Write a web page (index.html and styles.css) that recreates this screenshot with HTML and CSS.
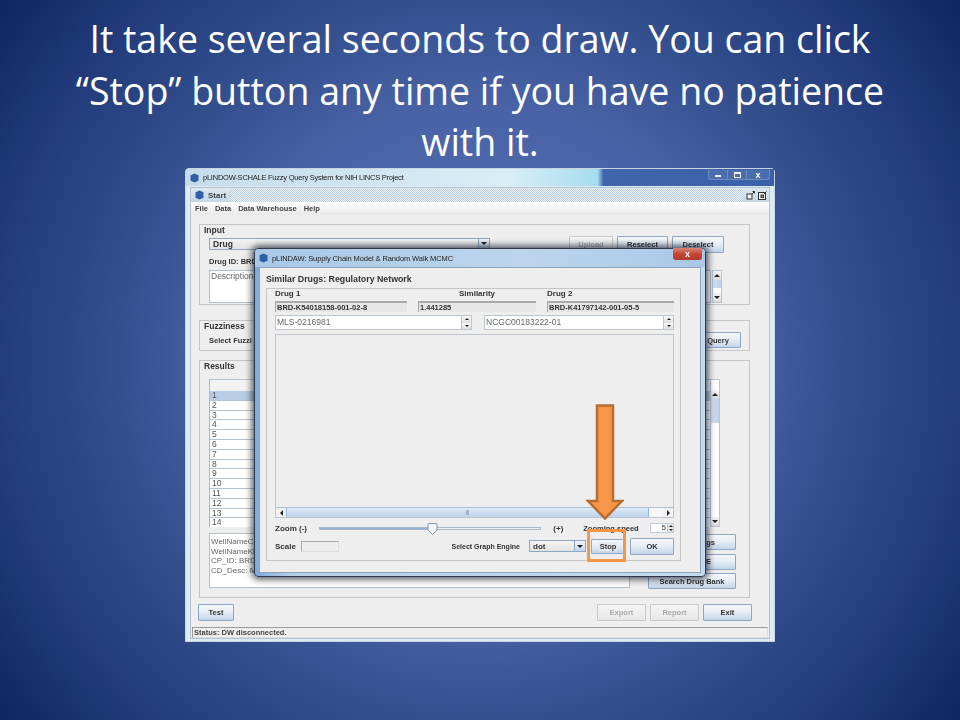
FILE: index.html
```html
<!DOCTYPE html>
<html>
  <head>
    <meta charset="UTF-8" />
    <title>Stop button slide</title>
    <link rel="stylesheet" href="styles.css">
  </head>
  <body>
    <div class="slide">
      <h1 class="slide-title">It take several seconds to draw. You can click<br>“Stop” button any time if you have no patience<br>with it.</h1>

      <!-- main application window -->
      <div class="window app-window">
        <div class="titlebar">
          <svg class="logo" viewBox="0 0 10 10"><polygon points="5,0 9.4,2 9.4,8 5,10 0.6,8 0.6,2" /></svg>
          <span class="titlebar-text app-title">pLINDOW-SCHALE Fuzzy Query System for NIH LINCS Project</span>
          <div class="win-controls">
            <span class="win-btn"><i class="min-glyph"></i></span>
            <span class="win-btn"><i class="max-glyph"></i></span>
            <span class="win-btn win-close">x</span>
          </div>
        </div>
        <div class="frame">
          <div class="frame-head">
            <div class="frame-name">
              <svg class="logo" viewBox="0 0 10 10"><polygon points="5,0 9.4,2 9.4,8 5,10 0.6,8 0.6,2" /></svg>
              <span>Start</span>
            </div>
            <div class="frame-dots"></div>
            <div class="frame-icons">
              <svg class="frame-icon" viewBox="0 0 9 9"><rect x="1" y="3" width="5" height="5" /><path d="M6 3 L8.5 .5 M6.5 .5 H8.5 V2.5" /></svg>
              <svg class="frame-icon" viewBox="0 0 9 9"><rect x=".5" y="1.5" width="7" height="7" /><rect class="inner" x="3" y="4" width="2.5" height="2.5" /><path d="M6 3 L8.5 .5" /></svg>
            </div>
          </div>
          <div class="menubar">
            <span>File</span><span>Data</span><span>Data Warehouse</span><span>Help</span>
          </div>
          <div class="frame-body">
            <div class="group group-input">
              <div class="group-name">Input</div>
              <div class="input-row">
                <div class="combo input-combo"><span>Drug</span><b class="combo-arrow"><i class="tri-down"></i></b></div>
                <div class="btn-row">
                  <button class="btn btn-off upload">Upload</button>
                  <button class="btn reselect">Reselect</button>
                  <button class="btn deselect">Deselect</button>
                </div>
              </div>
              <div class="drug-id">Drug ID: BRD</div>
              <div class="desc-row">
                <div class="textbox desc-box">Description:</div>
                <div class="vscroll desc-scroll">
                  <b class="vs-btn"><i class="tri-up"></i></b>
                  <b class="vs-thumb"></b>
                  <b class="vs-space"></b>
                  <b class="vs-btn"><i class="tri-down"></i></b>
                </div>
              </div>
            </div>

            <div class="group group-fuzzy">
              <div class="group-name">Fuzziness</div>
              <div class="fuzzy-row">
                <span class="bold">Select Fuzzi</span>
                <button class="btn query">Query</button>
              </div>
            </div>

            <div class="group group-results">
              <div class="group-name">Results</div>
              <div class="table-wrap">
                <div class="table">
                  <div class="table-head"></div>
                  <div class="tr tr-on">1</div>
                  <div class="tr">2</div>
                  <div class="tr">3</div>
                  <div class="tr">4</div>
                  <div class="tr">5</div>
                  <div class="tr">6</div>
                  <div class="tr">7</div>
                  <div class="tr">8</div>
                  <div class="tr">9</div>
                  <div class="tr">10</div>
                  <div class="tr">11</div>
                  <div class="tr">12</div>
                  <div class="tr">13</div>
                  <div class="tr">14</div>
                </div>
                <div class="vscroll table-scroll">
                  <b class="vs-btn"><i class="tri-up"></i></b>
                  <b class="vs-thumb table-thumb"></b>
                  <b class="vs-space"></b>
                  <b class="vs-btn"><i class="tri-down"></i></b>
                </div>
              </div>
              <div class="results-bottom">
                <div class="textbox detail-box">
                  WellNameCF<br>WellNameKD<br>CP_ID: BRD-<br>CD_Desc: M
                </div>
                <div class="side-btns">
                  <button class="btn clip-btn">ngs</button>
                  <button class="btn clip-btn clip-fe">FE</button>
                  <button class="btn">Search Drug Bank</button>
                </div>
              </div>
            </div>

            <div class="footer">
              <button class="btn test">Test</button>
              <div class="footer-right">
                <button class="btn btn-off foot-btn">Export</button>
                <button class="btn btn-off foot-btn">Report</button>
                <button class="btn foot-btn">Exit</button>
              </div>
            </div>
          </div>
          <div class="statusbar">Status: DW disconnected.</div>
        </div>
      </div>

      <!-- dialog on top -->
      <div class="window dialog">
        <div class="titlebar dialog-bar">
          <svg class="logo" viewBox="0 0 10 10"><polygon points="5,0 9.4,2 9.4,8 5,10 0.6,8 0.6,2" /></svg>
          <span class="titlebar-text dialog-title">pLINDAW: Supply Chain Model &amp; Random Walk MCMC</span>
          <span class="dialog-close">x</span>
        </div>
        <div class="dialog-body">
          <div class="dialog-heading">Similar Drugs: Regulatory Network</div>
          <div class="dialog-group">
            <div class="drug-grid">
              <span>Drug 1</span>
              <span class="similarity">Similarity</span>
              <span>Drug 2</span>
              <div class="readonly">BRD-K54018158-001-02-8</div>
              <div class="readonly">1.441285</div>
              <div class="readonly">BRD-K41797142-001-05-5</div>
            </div>
            <div class="spin-row">
              <div class="spin-field spin-left">
                <div class="spin-text">MLS-0216981</div>
                <div class="spin-btns"><b><i class="tri-up"></i></b><b><i class="tri-down"></i></b></div>
              </div>
              <div class="spin-field spin-right">
                <div class="spin-text">NCGC00183222-01</div>
                <div class="spin-btns"><b><i class="tri-up"></i></b><b><i class="tri-down"></i></b></div>
              </div>
            </div>
            <div class="canvas">
              <div class="canvas-space"></div>
              <div class="hscroll">
                <b class="hs-btn"><i class="tri-left"></i></b>
                <b class="hs-thumb"><i class="hs-grip"></i></b>
                <b class="hs-space"></b>
                <b class="hs-btn"><i class="tri-right"></i></b>
              </div>
            </div>
            <div class="zoom-row">
              <span class="zoom-minus">Zoom (-)</span>
              <div class="slider">
                <div class="slider-fill"></div>
                <svg class="slider-thumb" viewBox="0 0 11 12"><path d="M1 1.5 Q1 .5 2 .5 H9 Q10 .5 10 1.5 V7 L5.5 11.5 L1 7 Z" /></svg>
              </div>
              <span class="zoom-plus">(+)</span>
              <span class="zoom-speed">Zooming speed</span>
              <div class="mini-spin">
                <span>5</span>
                <div class="spin-btns"><b><i class="tri-up"></i></b><b><i class="tri-down"></i></b></div>
              </div>
            </div>
            <div class="scale-row">
              <span>Scale</span>
              <div class="scale-box"></div>
              <span class="engine-label">Select Graph Engine</span>
              <div class="combo engine-combo"><span>dot</span><b class="combo-arrow"><i class="tri-down"></i></b></div>
              <button class="btn stop"><span>Stop</span></button>
              <button class="btn ok">OK</button>
            </div>
          </div>
        </div>
      </div>

      <!-- slide annotations -->
      <svg class="arrow" viewBox="0 0 38 116">
        <path d="M11 1.5 H27 V97 H36 L19 114.5 L2 97 H11 Z" />
      </svg>
      <div class="highlight"></div>
    </div>
  </body>
</html>
```

FILE: styles.css
```css
* {
  box-sizing: border-box;
}
body {
  margin: 0;
  font-family: "Liberation Sans", Arial, sans-serif;
}
button {
  font-family: inherit;
  padding: 0;
}
i, b {
  display: block;
}

.slide {
  position: relative;
  width: 960px;
  height: 720px;
  overflow: hidden;
  background: radial-gradient(circle 600px at 480px 360px, #5070b4 0%, #4a63a6 42%, #34508f 60%, #243c7b 80%, #0e2763 100%);
}
.slide-title {
  margin: 0;
  padding-top: 13px;
  text-align: center;
  color: #fff;
  font-family: "Open Sans", sans-serif;
  font-size: 37.5px;
  font-weight: 400;
  line-height: 51.5px;
}

/* windows */
.window {
  position: absolute;
  filter: blur(0.35px);
  color: #333;
  font-size: 8.5px;
}
.app-window {
  left: 185px;
  top: 168px;
  width: 590px;
  height: 474px;
  padding: 0 4px 4px;
  background: #dcecf4;
  border-radius: 4px 4px 0 0;
  border: 1px solid #c8d4e0;
}
.titlebar {
  display: flex;
  align-items: center;
  height: 17px;
  margin: 0 -4px;
  padding: 0 4px;
  background: linear-gradient(90deg, #c6dcec 0, #d9edf7 55%, #a6dcef 70%, #3f65ab 71%, #3a60a8 100%);
}
.logo {
  width: 9px;
  height: 10px;
  margin-right: 4px;
  flex: none;
  fill: #2f5fa6;
}
.titlebar-text {
  font-family: "Liberation Sans", sans-serif;
  font-size: 7.5px;
  color: #222;
  white-space: nowrap;
}
.app-title {
  letter-spacing: -.24px;
}
.dialog-title {
  letter-spacing: -.1px;
}
.win-controls {
  display: flex;
  margin-left: auto;
  margin-top: -5px;
  height: 10px;
  border: 1px solid #6d8bbd;
  border-top: 0;
  border-radius: 0 0 3px 3px;
}
.win-btn {
  display: flex;
  align-items: center;
  justify-content: center;
  width: 19px;
  border-right: 1px solid #6d8bbd;
  color: #fff;
  font-size: 9px;
  font-weight: bold;
  background: rgba(255,255,255,.08);
}
.win-close {
  width: 22px;
  border-right: 0;
}
.min-glyph {
  width: 6px;
  height: 2px;
  margin-top: 3px;
  background: #eee;
}
.max-glyph {
  width: 7px;
  height: 6px;
  border: 1px solid #eee;
  border-top-width: 2px;
}

.frame {
  height: 452px;
  margin-top: 1px;
  background: #eee;
  border: 1px solid #b5c2cf;
  display: flex;
  flex-direction: column;
}
.frame-head {
  display: flex;
  align-items: center;
  height: 15px;
  background: linear-gradient(#dde8f2, #c4d6e6);
}
.frame-name {
  display: flex;
  align-items: center;
  padding: 0 4px 0 4px;
  font-weight: bold;
  font-size: 8px;
  color: #444;
}
.frame-dots {
  flex: 1;
  height: 13px;
  background: repeating-conic-gradient(#b9cde0 0 25%, #eef3f8 0 50%) 0 0/2px 2px;
}
.frame-icons {
  display: flex;
  gap: 3px;
  padding: 0 2px 0 3px;
}
.frame-icon {
  width: 9px;
  height: 9px;
  fill: #f4f4f4;
  stroke: #333;
  stroke-width: 1;
}
.frame-icon .inner {
  fill: #8fa6c0;
  stroke: #333;
}
.menubar {
  display: flex;
  gap: 7px;
  align-items: center;
  height: 13px;
  padding-left: 4px;
  font-weight: bold;
  font-size: 7.5px;
  color: #444;
  background: linear-gradient(#fff, #e8e8e8);
}
.frame-body {
  flex: 1;
  padding: 9px 17px 0 7px;
}

.group {
  position: relative;
  margin: 0 2px 0 1px;
  border: 1px solid #c6c6c6;
  padding-left: 9px;
}
.group-name {
  height: 11px;
  margin-left: -5px;
  font-weight: bold;
  font-size: 8.5px;
  line-height: 10px;
  color: #333;
}
.group-input {
  height: 81px;
  margin-bottom: 15px;
}
.group-fuzzy {
  height: 31px;
  margin-bottom: 9px;
}
.group-results {
  height: 238px;
  margin-bottom: 6px;
}
.group-results .group-name {
  height: 13px;
}
.bold {
  font-weight: bold;
}

.btn {
  height: 17px;
  font-size: 7.5px;
  font-weight: bold;
  color: #333;
  border: 1px solid #8ea7c6;
  border-radius: 1px;
  background: linear-gradient(#f5f8fb, #e6edf5 45%, #c4d5e8);
}
.btn-off {
  color: #aaa;
  border-color: #c9c9c9;
  background: linear-gradient(#f4f4f4, #e8e8e8);
}

.combo {
  display: flex;
  align-items: center;
  padding-left: 3px;
  border: 1px solid #8ea7c6;
  background: linear-gradient(#f4f4f4, #e3e3e3);
  color: #333;
}
.combo-arrow {
  display: flex;
  align-items: center;
  justify-content: center;
  width: 11px;
  height: 100%;
  margin-left: auto;
  border-left: 1px solid #8ea7c6;
  background: linear-gradient(#f3f6fa, #c4d5e8);
}
.tri-down, .tri-up, .tri-left, .tri-right {
  width: 0;
  height: 0;
  border-style: solid;
  border-color: transparent;
}
.tri-down {
  border-width: 3px 3px 0;
  border-top-color: #222;
}
.tri-up {
  border-width: 0 3px 3px;
  border-bottom-color: #222;
}
.tri-left {
  border-width: 3px 3px 3px 0;
  border-right-color: #222;
}
.tri-right {
  border-width: 3px 0 3px 3px;
  border-left-color: #222;
}

.input-row {
  display: flex;
  align-items: center;
  height: 17px;
  padding-right: 25px;
}
.input-combo {
  width: 281px;
  height: 12px;
  margin-top: -2px;
  font-weight: bold;
}
.btn-row {
  display: flex;
  gap: 4px;
  margin-left: auto;
}
.upload { width: 44px; }
.reselect { width: 51px; }
.deselect { width: 52px; }
.drug-id {
  height: 16px;
  padding-top: 4px;
  font-weight: bold;
  font-size: 7.5px;
}
.desc-row {
  display: flex;
  gap: 1px;
  margin-top: 1px;
  height: 33px;
  padding-right: 27px;
}
.textbox {
  flex: 1;
  padding: 1px 1px;
  border: 1px solid #b4c0cc;
  background: #fff;
  color: #666;
  font-size: 8.5px;
  line-height: 9.7px;
}
.vscroll {
  display: flex;
  flex-direction: column;
  width: 10px;
  border: 1px solid #b4c6da;
  background: #fff;
}
.vs-btn {
  display: flex;
  align-items: center;
  justify-content: center;
  height: 9px;
  background: linear-gradient(#f6f6f6, #dcdcdc);
}
.vs-thumb {
  height: 8px;
  background: linear-gradient(90deg, #d5e3f2, #bcd0e6);
}
.vs-space {
  flex: 1;
}

.fuzzy-row {
  display: flex;
  align-items: flex-start;
  padding-right: 8px;
}
.query {
  width: 46px;
  height: 16px;
  margin-left: auto;
}
.fuzzy-row .bold {
  font-size: 7.5px;
  padding-top: 4px;
}

.table-wrap {
  display: flex;
  height: 148px;
  margin-top: 5px;
  padding-right: 29px;
}
.table {
  flex: 1;
  overflow: hidden;
  border-left: 1px solid #a9b6c6;
}
.table-head {
  height: 12px;
  border-top: 1px solid #b7c3d0;
  background: #f2f2f2;
}
.tr {
  height: 9.8px;
  padding-left: 2px;
  background: #fff;
  border-bottom: 1px solid #b8c3d2;
  font-size: 8.5px;
  line-height: 9px;
  color: #555;
}
.tr-on {
  background: #b7cde4;
}
.table-scroll {
  width: 10px;
  padding-top: 10px;
}
.table-thumb {
  height: 24px;
}

.results-bottom {
  display: flex;
  align-items: flex-start;
  margin-top: 6px;
  padding-right: 13px;
}
.detail-box {
  flex: none;
  width: 421px;
  height: 55px;
  padding: 3px 1px;
  font-size: 8px;
}
.side-btns {
  display: flex;
  flex-direction: column;
  gap: 3.5px;
  width: 88px;
  margin-top: 1px;
  margin-left: auto;
}
.side-btns .btn {
  height: 16px;
}
.clip-btn {
  padding-right: 20px;
  text-align: right;
}
.clip-fe {
  padding-right: 24px;
}

.footer {
  display: flex;
  justify-content: space-between;
}
.test {
  width: 36px;
}
.footer-right {
  display: flex;
  gap: 4px;
}
.foot-btn {
  width: 49px;
}
.statusbar {
  height: 11px;
  margin: 6px 1px 0;
  padding-left: 1px;
  border: 1px solid #9a9a9a;
  border-right-color: #ddd;
  border-bottom-color: #ddd;
  font-weight: bold;
  font-size: 7.5px;
  line-height: 9px;
  color: #444;
}

/* dialog */
.dialog {
  left: 254px;
  top: 248px;
  width: 452px;
  height: 329px;
  padding: 0 4px 4px;
  background: linear-gradient(90deg, #7fa9d9, #b5cfe8 8%, #c4daee);
  border: 1px solid #2e3a4c;
  border-radius: 4px;
  box-shadow: 0 0 7px 2px rgba(10,15,30,.75);
}
.dialog-bar {
  position: relative;
  height: 18px;
  background: linear-gradient(90deg, #a8c8e6, #bcd5ec 60%, #a9c8e6);
  border-radius: 4px 4px 0 0;
}
.dialog-close {
  position: absolute;
  right: 3px;
  top: -1px;
  display: flex;
  align-items: center;
  justify-content: center;
  width: 29px;
  height: 12px;
  color: #fff;
  font-size: 9px;
  font-weight: bold;
  border-radius: 0 0 3px 3px;
  background: linear-gradient(#d98677, #c6402f 55%, #b03d30);
}
.dialog-body {
  height: 306px;
  padding-left: 6px;
  padding-right: 19px;
  background: #eee;
  border: 1px solid #8fa4ba;
}
.dialog-heading {
  height: 20px;
  padding-top: 6px;
  font-size: 8.8px;
  font-weight: bold;
  color: #333;
}
.dialog-group {
  height: 273px;
  padding: 0 6px 0 8px;
  border: 1px solid #c6c6c6;
  font-weight: bold;
  font-size: 8px;
}
.drug-grid {
  display: grid;
  grid-template-columns: 132px 118px 127px;
  grid-template-rows: 12px 11px;
  column-gap: 11px;
}
.drug-grid span {
  line-height: 9px;
}
.similarity {
  padding-left: 41px;
}
.readonly {
  padding-left: 1px;
  border-top: 2px solid #aaa;
  border-left: 1px solid #aaa;
  background: #e6e6e6;
  font-size: 7.5px;
  line-height: 9px;
  color: #333;
}
.spin-row {
  display: flex;
  gap: 12px;
  margin-top: 3px;
  height: 15px;
}
.spin-left { width: 197px; }
.spin-right { width: 190px; }
.spin-field {
  display: flex;
  border: 1px solid #bcc6d0;
  background: #fff;
}
.spin-text {
  flex: 1;
  padding: 1px 1px;
  font-weight: normal;
  color: #666;
  font-size: 8.5px;
}
.spin-btns {
  display: flex;
  flex-direction: column;
  width: 10px;
  border-left: 1px solid #bcc6d0;
}
.spin-btns b {
  flex: 1;
  display: flex;
  align-items: center;
  justify-content: center;
  background: linear-gradient(#f8f8f8, #dedede);
}
.spin-btns .tri-up {
  border-width: 0 2.5px 2.5px;
}
.spin-btns .tri-down {
  border-width: 2.5px 2.5px 0;
}
.canvas {
  display: flex;
  flex-direction: column;
  height: 184px;
  margin-top: 4px;
  border: 1px solid #bcc6d0;
}
.canvas-space {
  flex: 1;
}
.hscroll {
  display: flex;
  height: 10px;
  border-top: 1px solid #a9c0dc;
}
.hs-btn {
  display: flex;
  align-items: center;
  justify-content: center;
  width: 10px;
  background: #f2f2f2;
}
.hs-thumb {
  display: flex;
  align-items: center;
  justify-content: center;
  width: 363px;
  background: linear-gradient(#dfeaf6, #bcd2ea);
  border-left: 1px solid #9ab5d6;
  border-right: 1px solid #9ab5d6;
}
.hs-grip {
  width: 3px;
  height: 5px;
  background: #9db6d6;
}
.hs-space {
  flex: 1;
  background: #f6f6f6;
}
.zoom-row {
  display: flex;
  align-items: center;
  height: 14px;
  margin-top: 3px;
}
.zoom-minus {
  width: 44px;
}
.slider {
  position: relative;
  width: 223px;
  height: 3px;
  background: #eee;
  border: 1px solid #a9b8c8;
}
.slider-fill {
  width: 112px;
  height: 100%;
  background: #8fb2dc;
}
.slider-thumb {
  position: absolute;
  left: 107px;
  top: -5px;
  width: 11px;
  height: 12px;
  fill: #f5f5f5;
  stroke: #6f8bad;
  stroke-width: .9;
}
.zoom-plus {
  margin-left: 12px;
  width: 30px;
}
.zoom-speed {
  width: 67px;
  font-size: 7.5px;
}
.mini-spin {
  display: flex;
  width: 24px;
  height: 10px;
  border: 1px solid #c2ccd6;
  background: #fff;
}
.mini-spin span {
  flex: 1;
  text-align: right;
  padding-right: 1px;
  line-height: 8px;
  font-weight: normal;
}
.mini-spin .spin-btns {
  width: 6px;
}
.scale-row {
  display: flex;
  align-items: center;
  height: 16px;
  margin-top: 3px;
}
.scale-row > span:first-child {
  width: 26px;
}
.scale-box {
  width: 38px;
  height: 11px;
  border: 1px solid #aaa;
  border-right-color: #ddd;
  border-bottom-color: #ddd;
}
.engine-label {
  margin-left: auto;
  margin-right: 9px;
  font-size: 7px;
}
.engine-combo {
  width: 57px;
  height: 12px;
  font-size: 8px;
}
.stop {
  width: 34px;
  height: 15px;
  margin-left: 5px;
}
.stop span {
  padding: 0 1px;
  background: #e3e9f1;
}
.ok {
  width: 44px;
  margin-left: 5px;
}

/* annotations */
.arrow {
  position: absolute;
  left: 586px;
  top: 404px;
  width: 38px;
  height: 116px;
  fill: #f79646;
  stroke: #b66d31;
  stroke-width: 2.5;
}
.highlight {
  position: absolute;
  left: 587px;
  top: 529px;
  width: 39px;
  height: 33px;
  border: 3px solid #f79646;
}
```
